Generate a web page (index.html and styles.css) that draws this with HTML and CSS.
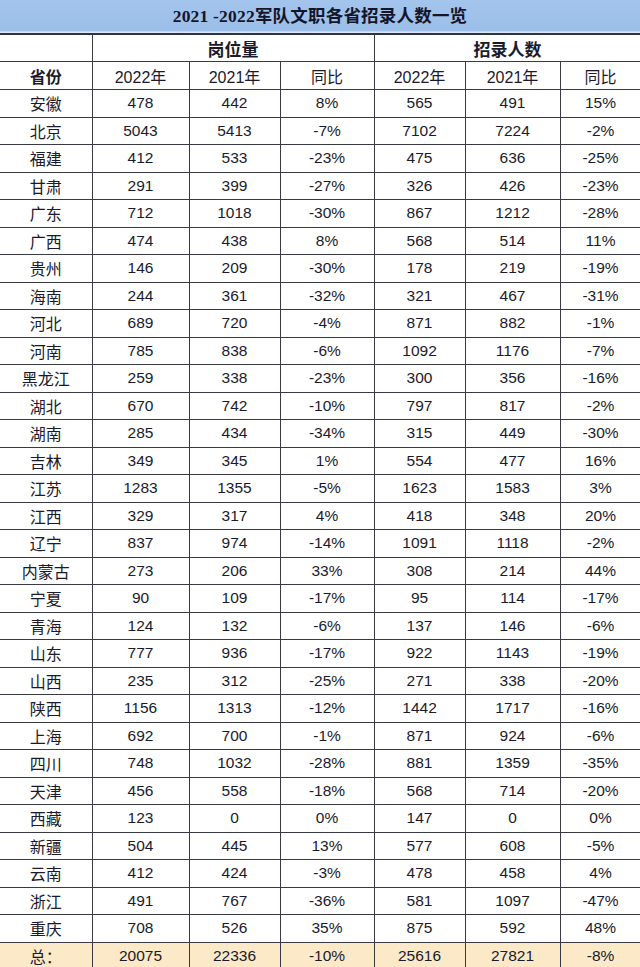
FILE: index.html
```html
<!DOCTYPE html>
<html lang="zh-CN">
<head>
<meta charset="utf-8">
<title>2021-2022军队文职各省招录人数一览</title>
<link rel="stylesheet" href="styles.css">
</head>
<body>
<div class="sheet">
  <div class="title">2021 -2022军队文职各省招录人数一览</div>
  <table class="data">
    <colgroup>
      <col class="c-prov"><col class="c1"><col class="c2"><col class="c3"><col class="c4"><col class="c5"><col class="c6">
    </colgroup>
    <thead>
      <tr class="h1">
        <th class="blank"></th>
        <th colspan="3" class="group">岗位量</th>
        <th colspan="3" class="group">招录人数</th>
      </tr>
      <tr class="h2">
        <th class="prov-h">省份</th>
        <th>2022年</th><th>2021年</th><th>同比</th>
        <th>2022年</th><th>2021年</th><th>同比</th>
      </tr>
    </thead>
    <tbody>
      <tr><td class="prov">安徽</td><td>478</td><td>442</td><td>8%</td><td>565</td><td>491</td><td>15%</td></tr>
      <tr><td class="prov">北京</td><td>5043</td><td>5413</td><td>-7%</td><td>7102</td><td>7224</td><td>-2%</td></tr>
      <tr><td class="prov">福建</td><td>412</td><td>533</td><td>-23%</td><td>475</td><td>636</td><td>-25%</td></tr>
      <tr><td class="prov">甘肃</td><td>291</td><td>399</td><td>-27%</td><td>326</td><td>426</td><td>-23%</td></tr>
      <tr><td class="prov">广东</td><td>712</td><td>1018</td><td>-30%</td><td>867</td><td>1212</td><td>-28%</td></tr>
      <tr><td class="prov">广西</td><td>474</td><td>438</td><td>8%</td><td>568</td><td>514</td><td>11%</td></tr>
      <tr><td class="prov">贵州</td><td>146</td><td>209</td><td>-30%</td><td>178</td><td>219</td><td>-19%</td></tr>
      <tr><td class="prov">海南</td><td>244</td><td>361</td><td>-32%</td><td>321</td><td>467</td><td>-31%</td></tr>
      <tr><td class="prov">河北</td><td>689</td><td>720</td><td>-4%</td><td>871</td><td>882</td><td>-1%</td></tr>
      <tr><td class="prov">河南</td><td>785</td><td>838</td><td>-6%</td><td>1092</td><td>1176</td><td>-7%</td></tr>
      <tr><td class="prov">黑龙江</td><td>259</td><td>338</td><td>-23%</td><td>300</td><td>356</td><td>-16%</td></tr>
      <tr><td class="prov">湖北</td><td>670</td><td>742</td><td>-10%</td><td>797</td><td>817</td><td>-2%</td></tr>
      <tr><td class="prov">湖南</td><td>285</td><td>434</td><td>-34%</td><td>315</td><td>449</td><td>-30%</td></tr>
      <tr><td class="prov">吉林</td><td>349</td><td>345</td><td>1%</td><td>554</td><td>477</td><td>16%</td></tr>
      <tr><td class="prov">江苏</td><td>1283</td><td>1355</td><td>-5%</td><td>1623</td><td>1583</td><td>3%</td></tr>
      <tr><td class="prov">江西</td><td>329</td><td>317</td><td>4%</td><td>418</td><td>348</td><td>20%</td></tr>
      <tr><td class="prov">辽宁</td><td>837</td><td>974</td><td>-14%</td><td>1091</td><td>1118</td><td>-2%</td></tr>
      <tr><td class="prov">内蒙古</td><td>273</td><td>206</td><td>33%</td><td>308</td><td>214</td><td>44%</td></tr>
      <tr><td class="prov">宁夏</td><td>90</td><td>109</td><td>-17%</td><td>95</td><td>114</td><td>-17%</td></tr>
      <tr><td class="prov">青海</td><td>124</td><td>132</td><td>-6%</td><td>137</td><td>146</td><td>-6%</td></tr>
      <tr><td class="prov">山东</td><td>777</td><td>936</td><td>-17%</td><td>922</td><td>1143</td><td>-19%</td></tr>
      <tr><td class="prov">山西</td><td>235</td><td>312</td><td>-25%</td><td>271</td><td>338</td><td>-20%</td></tr>
      <tr><td class="prov">陕西</td><td>1156</td><td>1313</td><td>-12%</td><td>1442</td><td>1717</td><td>-16%</td></tr>
      <tr><td class="prov">上海</td><td>692</td><td>700</td><td>-1%</td><td>871</td><td>924</td><td>-6%</td></tr>
      <tr><td class="prov">四川</td><td>748</td><td>1032</td><td>-28%</td><td>881</td><td>1359</td><td>-35%</td></tr>
      <tr><td class="prov">天津</td><td>456</td><td>558</td><td>-18%</td><td>568</td><td>714</td><td>-20%</td></tr>
      <tr><td class="prov">西藏</td><td>123</td><td>0</td><td>0%</td><td>147</td><td>0</td><td>0%</td></tr>
      <tr><td class="prov">新疆</td><td>504</td><td>445</td><td>13%</td><td>577</td><td>608</td><td>-5%</td></tr>
      <tr><td class="prov">云南</td><td>412</td><td>424</td><td>-3%</td><td>478</td><td>458</td><td>4%</td></tr>
      <tr><td class="prov">浙江</td><td>491</td><td>767</td><td>-36%</td><td>581</td><td>1097</td><td>-47%</td></tr>
      <tr><td class="prov">重庆</td><td>708</td><td>526</td><td>35%</td><td>875</td><td>592</td><td>48%</td></tr>
      <tr class="total"><td class="prov">总：</td><td>20075</td><td>22336</td><td>-10%</td><td>25616</td><td>27821</td><td>-8%</td></tr>
    </tbody>
  </table>
</div>
</body>
</html>
```

FILE: styles.css
```css
html, body {
  margin: 0;
  padding: 0;
  background: #ffffff;
}

.sheet {
  width: 640px;
  height: 967px;
  overflow: hidden;
  font-family: "Liberation Sans", "Noto Sans CJK SC", sans-serif;
  color: #1a1a2c;
}

.title {
  height: 32px;
  line-height: 33px;
  background: linear-gradient(#a3c4ec, #9bbfe9);
  border-bottom: 1px solid #dbe7f6;
  box-shadow: inset 0 -1px 0 #c2d6f0;
  text-align: center;
  font-family: "Liberation Serif", "Noto Sans CJK SC", serif;
  font-weight: bold;
  font-size: 17.5px;
  color: #15152a;
  letter-spacing: 0.2px;
}

.data {
  width: 641px;
  table-layout: fixed;
  border-collapse: collapse;
  border-top: 2px solid #2c3446;
}

.c-prov { width: 92px; }
.c1 { width: 97px; }
.c2 { width: 91px; }
.c3 { width: 94px; }
.c4 { width: 91px; }
.c5 { width: 95px; }
.c6 { width: 81px; }

.data th,
.data td {
  border: 1px solid #3a3a44;
  padding: 0;
  text-align: center;
  vertical-align: middle;
  font-size: 15.5px;
  font-weight: normal;
  white-space: nowrap;
}

.data th:first-child,
.data td:first-child {
  border-left: none;
}

.data tr.h1 th {
  height: 26px;
}

.data tr.h2 th {
  height: 27px;
  font-size: 16px;
}

.data th.group,
.data th.prov-h {
  font-weight: bold;
  font-size: 17px;
  font-family: "Noto Sans CJK SC", sans-serif;
}

.data tbody td {
  height: 26.5px;
}

.data td.prov {
  font-size: 16px;
  font-family: "Noto Sans CJK SC", sans-serif;
}

.data tr.total td {
  background: #fce9c8;
  border-bottom: none;
}
```
